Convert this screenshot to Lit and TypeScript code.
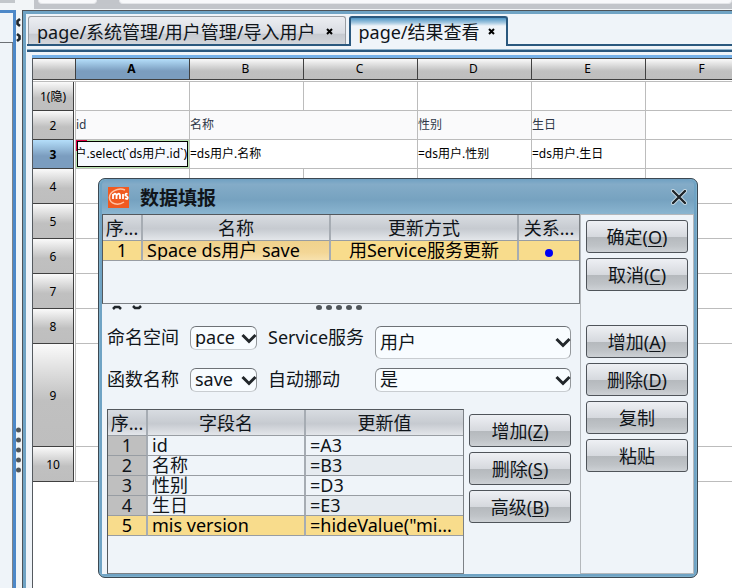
import { LitElement, html, css, nothing } from "lit";
import { customElement, property } from "lit/decorators.js";
import { classMap } from "lit/directives/class-map.js";

interface Cell {
  text: string;
  span?: number;
  tint?: boolean;
  editing?: boolean;
}

interface Row {
  label: string;
  size: string;
  selected?: boolean;
  cells: Cell[];
}

const blank = (n: number): Cell[] => Array.from({ length: n }, () => ({ text: "" }));

const columns = ["A", "B", "C", "D", "E", "F"];

const rows: Row[] = [
  { label: "1(隐)", size: "short", cells: blank(6) },
  {
    label: "2",
    size: "short",
    cells: [
      { text: "id", tint: true },
      { text: "名称", span: 2, tint: true },
      { text: "性别", tint: true },
      { text: "生日", tint: true },
      { text: "" },
    ],
  },
  {
    label: "3",
    size: "short",
    selected: true,
    cells: [
      { text: "户.select(`ds用户.id`)", editing: true },
      { text: "=ds用户.名称", span: 2 },
      { text: "=ds用户.性别" },
      { text: "=ds用户.生日" },
      { text: "" },
    ],
  },
  { label: "4", size: "normal", cells: blank(6) },
  { label: "5", size: "normal", cells: blank(6) },
  { label: "6", size: "normal", cells: blank(6) },
  { label: "7", size: "normal", cells: blank(6) },
  { label: "8", size: "normal", cells: blank(6) },
  { label: "9", size: "tall", cells: blank(6) },
  { label: "10", size: "normal", cells: blank(6) },
];

@customElement("report-grid")
export class ReportGrid extends LitElement {
  static styles = css`
    :host {
      display: block;
      overflow: hidden;
      background: #fff;
      border-top: 1px solid #454545;
      border-left: 1px solid #555a5f;
      font: 12px/16px "Noto Sans", "Noto Sans CJK SC", sans-serif;
      color: #000;
    }
    table {
      table-layout: fixed;
      border-collapse: separate;
      border-spacing: 0;
      width: 727px;
    }
    .head-col { width: 43px; }
    th, td { padding: 0; box-sizing: border-box; }
    th { font-weight: 400; text-align: center; background-repeat: no-repeat; background-clip: padding-box; }
    thead th {
      height: 23px;
      padding: 0 3px 2px 0;
      border-bottom: 1px solid #bcbcbc;
      background-image: linear-gradient(#404040, #404040), linear-gradient(#404040, #404040),
        linear-gradient(#fafafa, #c0c0c0 60%, #bebebe);
      background-position: right top, left bottom 1px, left top;
      background-size: 1px 21px, 100% 1px, 100% 20px;
    }
    thead .active {
      background-image: linear-gradient(#404040, #404040), linear-gradient(#404040, #404040),
        linear-gradient(#b4defa, #7b9dbf 60%, #7b9dbf);
    }
    .active { font-weight: 700; }
    tbody th {
      padding-right: 2px;
      border-right: 1px solid #bcbcbc;
      background-image: linear-gradient(#404040, #404040), linear-gradient(#404040, #404040),
        linear-gradient(#fafafa, #c0c0c0 55%, #bebebe);
      background-position: right 1px top, left bottom, left top;
      background-size: 1px 100%, 41px 1px, 41px 100%;
    }
    tbody .active {
      background-image: linear-gradient(#404040, #404040), linear-gradient(#404040, #404040),
        linear-gradient(#b4defa, #7b9dbf 55%, #7b9dbf);
    }
    td {
      border-right: 1px solid #bcbcbc;
      border-bottom: 1px solid #bcbcbc;
      white-space: nowrap;
      overflow: hidden;
    }
    .short { height: 29px; }
    .normal { height: 35px; }
    .tall { height: 103px; }
    .tint { background: #fafafb; color: #2f3848; }
    .editing { background: linear-gradient(135deg, #e00045 8px, #b9e6b0 8px); padding: 1px; }
    .editor {
      display: flex;
      justify-content: flex-end;
      align-items: center;
      box-sizing: border-box;
      height: 26px;
      overflow: hidden;
      border: 1px solid #000;
      background: #f6f9ff;
    }
  `;

  render() {
    return html`
      <table>
        <colgroup>
          <col class="head-col" />
          ${columns.map(() => html`<col />`)}
        </colgroup>
        <thead>
          <tr>
            <th></th>
            ${columns.map((c) => html`<th scope="col" class=${c === "A" ? "active" : ""}>${c}</th>`)}
          </tr>
        </thead>
        <tbody>
          ${rows.map(
            (r) => html`<tr class=${r.size}>
              <th scope="row" class=${r.selected ? "active" : ""}>${r.label}</th>
              ${r.cells.map(
                (c) => html`<td
                  colspan=${c.span ?? 1}
                  class=${classMap({ tint: !!c.tint, editing: !!c.editing })}
                >${c.editing ? html`<div class="editor"><span>${c.text}</span></div>` : c.text}</td>`
              )}
            </tr>`
          )}
        </tbody>
      </table>
    `;
  }
}

@customElement("push-button")
export class PushButton extends LitElement {
  @property() label = "";
  @property() key = "";

  static styles = css`
    :host { display: block; }
    button {
      display: block;
      box-sizing: border-box;
      width: 100%;
      height: 33px;
      padding: 0;
      border: 1px solid #4f545a;
      border-radius: 3px;
      background: linear-gradient(#eef0f4, #d6d9de 50%, #b5b9bd 52%, #bfc3c7 80%, #cdd1d5);
      font: 18px/30px "Noto Sans", "Noto Sans CJK SC", sans-serif;
      color: #10151a;
    }
    u { text-decoration-thickness: 1px; text-underline-offset: 2px; }
  `;

  render() {
    return html`<button type="button">${this.label}${this.key ? html`(<u>${this.key}</u>)` : nothing}</button>`;
  }
}

@customElement("combo-box")
export class ComboBox extends LitElement {
  @property() label = "";
  @property() value = "";
  @property({ type: Boolean, reflect: true }) tall = false;

  static styles = css`
    :host { display: contents; }
    label { white-space: nowrap; line-height: 22px; }
    .box { display: grid; align-items: center; height: 23px; }
    :host([tall]) .box { height: 33px; }
    select, svg { grid-area: 1 / 1; }
    select {
      appearance: none;
      box-sizing: border-box;
      width: 100%;
      height: 100%;
      padding: 0 0 2px 4px;
      border: 1px solid #c9cdd1;
      border-top: 1px solid #6d7176;
      border-left-color: #94989c;
      border-right-color: #94989c;
      border-radius: 6px;
      background: #f8fcff;
      font: 18px/20px "Noto Sans", "Noto Sans CJK SC", sans-serif;
      color: #10151a;
    }
    svg { justify-self: end; width: 16px; height: 11px; pointer-events: none; }
  `;

  render() {
    return html`
      <label for="field">${this.label}</label>
      <div class="box">
        <select id="field"><option>${this.value}</option></select>
        <svg viewBox="0 0 16 11"><path d="M1.5 2 L8 8.5 L14.5 2" fill="none" stroke="#22272b" stroke-width="3" /></svg>
      </div>
    `;
  }
}

const fields: [string, string][] = [
  ["id", "=A3"],
  ["名称", "=B3"],
  ["性别", "=D3"],
  ["生日", "=E3"],
  ["mis version", '=hideValue("mi...'],
];

@customElement("fill-dialog")
export class FillDialog extends LitElement {
  static styles = css`
    :host {
      display: block;
      box-sizing: border-box;
      border: 1px solid #3c4852;
      border-radius: 7px;
      padding: 0 3px 3px;
      background: #6fa3c4;
      box-shadow: inset 0 0 0 1px #7fb0cc;
      font: 18px/20px "Noto Sans", "Noto Sans CJK SC", sans-serif;
      color: #10151a;
    }
    header {
      display: flex;
      align-items: center;
      height: 35px;
      gap: 11px;
      padding: 0 7px 0 6px;
      background: linear-gradient(#6fa0c2, #84acc8 15%, #76a2c0 60%, #8ab5d0);
      border-radius: 6px 6px 0 0;
    }
    h1 { margin: 0; flex: 1; font-size: 19px; line-height: 20px; font-weight: 700; padding-top: 3px; }
    .logo { width: 21px; height: 21px; margin-top: 1px; }
    .close { display: flex; padding: 0; border: 0; background: none; }
    .close svg { width: 16px; height: 16px; }
    .body { display: flex; background: #eff4f9; }
    .left { flex: 1; min-width: 0; }
    .side {
      display: flex;
      flex-direction: column;
      gap: 5px;
      box-sizing: border-box;
      width: 114px;
      padding: 5px 5px 0;
      border: 1px solid #b4b8bc;
    }
    .side .group { margin-top: 29px; }
    table { table-layout: fixed; border-collapse: separate; border-spacing: 0; width: 100%; }
    .pane { box-sizing: border-box; border: 1px solid #53585d; border-bottom-color: #7c8186; border-right-color: #7c8186; }
    .top { height: 90px; }
    th, td {
      padding: 0;
      box-sizing: border-box;
      overflow: hidden;
      white-space: nowrap;
      font-weight: 400;
      border-right: 2px solid #a6acb3;
      border-bottom: 1px solid #989da3;
    }
    th:last-child, td:last-child { border-right: 0; }
    th { height: 26px; background: linear-gradient(#d8dce1, #c6cad0 55%, #e3e6ea); }
    td { height: 20px; line-height: 19px; padding-left: 4px; }
    .mid { text-align: center; padding-left: 0; }
    .num { width: 40px; }
    .name { width: 188px; }
    .rel { width: 60px; }
    .field { width: 158px; }
    .no { background: #bfbfbf; text-align: center; padding: 0; }
    .alt td:last-child { background: #e6ebf0; }
    .chosen td, .chosen.chosen td:last-child { background: #f8dc8c; color: #000; }
    .chosen .focus, .chosen.chosen .focus { background: linear-gradient(#f0d28c, #f3d696 60%, #f8e2ae); }
    .dot { display: inline-block; width: 8px; height: 8px; border-radius: 50%; background: #0000f5; }
    .splitter { display: grid; grid-template-columns: 1fr auto 1fr; align-items: center; height: 6px; padding: 0 13px 0 9px; }
    .splitter svg { display: block; height: 5px; }
    .arrows { width: 32px; }
    .grips { width: 46px; }
    form {
      display: grid;
      grid-template-columns: 72px 67px 96px 1fr;
      grid-template-rows: 33px 23px;
      column-gap: 11px;
      row-gap: 9px;
      padding: 16px 9px 0 5px;
    }
    .lower { display: flex; gap: 5px; padding: 18px 9px 0 5px; }
    .list { flex: 1; min-width: 0; height: 165px; }
    .tools { display: flex; flex-direction: column; gap: 5px; width: 102px; padding-top: 5px; }
  `;

  render() {
    return html`
      <header>
        <svg class="logo" viewBox="0 0 21 21">
          <rect width="21" height="21" fill="#f05a20" />
          <path d="M17 3 C10 0 1 5 1.500 11 C2 17 10 19 16 15" fill="none" stroke="#ffc3a4" stroke-width="1.500" />
          <path d="M5 12 V7 M5 8.500 Q7 5 8.500 8 V12 M8.500 8.500 Q11 5 12 8 V12 M15 7 V12 M19.500 7 Q17 6 17.500 8.500 Q21 10 19 12 L17 11.500" fill="none" stroke="#fff" stroke-width="1.800" />
        </svg>
        <h1>数据填报</h1>
        <button class="close" type="button" aria-label="关闭">
          <svg viewBox="0 0 16 16"><path d="M2 2 L14 14 M14 2 L2 14" stroke="#cfe0ea" stroke-width="4" stroke-linecap="round" /><path d="M2 2 L14 14 M14 2 L2 14" stroke="#1e2429" stroke-width="2.400" stroke-linecap="round" /></svg>
        </button>
      </header>
      <div class="body">
        <div class="left">
          <div class="pane top">
            <table>
              <thead>
                <tr><th class="num">序...</th><th class="name">名称</th><th>更新方式</th><th class="rel">关系...</th></tr>
              </thead>
              <tbody>
                <tr class="chosen">
                  <td class="mid">1</td><td class="focus">Space ds用户 save</td><td class="mid">用Service服务更新</td><td class="mid"><span class="dot"></span></td>
                </tr>
              </tbody>
            </table>
          </div>
          <div class="splitter">
            <svg class="arrows" viewBox="0 0 32 5"><path d="M2 4 L4 2 H8 L10 4 M22 1 L24 3 H28 L30 1" fill="none" stroke="#20262b" stroke-width="2.500" /></svg>
            <svg class="grips" viewBox="0 0 46 5">
              ${[3, 13, 23, 33, 43].map((x) => html`<svg x=${x - 3} y="0" width="6" height="5" viewBox="0 0 6 5"><ellipse cx="3" cy="2.500" rx="3" ry="2.500" fill="#50565b" /></svg>`)}
            </svg>
          </div>
          <form>
            <combo-box label="命名空间" value="pace"></combo-box>
            <combo-box label="Service服务" value="用户" tall></combo-box>
            <combo-box label="函数名称" value="save"></combo-box>
            <combo-box label="自动挪动" value="是"></combo-box>
          </form>
          <div class="lower">
            <div class="pane list">
              <table>
                <thead>
                  <tr><th class="num">序...</th><th class="field">字段名</th><th>更新值</th></tr>
                </thead>
                <tbody>
                  ${fields.map(
                    ([name, value], i) => html`<tr class=${classMap({ chosen: i === 4, alt: i % 2 === 1 })}>
                      <td class="no">${i + 1}</td><td>${name}</td><td class="focus">${value}</td>
                    </tr>`
                  )}
                </tbody>
              </table>
            </div>
            <div class="tools">
              <push-button label="增加" key="Z"></push-button>
              <push-button label="删除" key="S"></push-button>
              <push-button label="高级" key="B"></push-button>
            </div>
          </div>
        </div>
        <div class="side">
          <push-button label="确定" key="O"></push-button>
          <push-button label="取消" key="C"></push-button>
          <push-button class="group" label="增加" key="A"></push-button>
          <push-button label="删除" key="D"></push-button>
          <push-button label="复制"></push-button>
          <push-button label="粘贴"></push-button>
        </div>
      </div>
    `;
  }
}

@customElement("app-root")
export class AppRoot extends LitElement {
  static styles = css`
    :host {
      display: flex;
      flex-direction: column;
      position: relative;
      height: 100vh;
      overflow: hidden;
      background: #f2f5f7;
      font: 18px/20px "Noto Sans", "Noto Sans CJK SC", sans-serif;
      color: #10151a;
    }
    .strip { display: flex; flex: none; height: 10px; gap: 19px; }
    .stub { width: 15px; height: 3px; background: #c3c7cb; }
    .bar { flex: 1; display: flex; gap: 22px; height: 9px; box-sizing: border-box; padding-left: 4px; background: #c2c5ca; }
    .chip { height: 4px; width: 59px; box-sizing: border-box; border: 1px solid #e4e6e9; border-top: 0; border-radius: 0 0 6px 6px; background: #f8f9fb; }
    .chip.wide { flex: 1; }
    .work { display: flex; flex: 1; min-height: 0; }
    .outer { box-sizing: border-box; width: 16px; border: 3px solid #4d88c8; border-left: 0; border-bottom: 0; background: #eff4f9; }
    .caption { height: 29px; border-bottom: 1px solid #6c7075; }
    .rest { height: 100%; border-right: 1px solid #7e8287; }
    .divider { width: 6px; display: flex; flex-direction: column; align-items: flex-start; }
    .divider svg { width: 5px; display: block; flex: none; }
    .collapse { height: 24px; margin-top: 8px; }
    .grip { height: 46px; margin-top: 385px; }
    .window {
      flex: 1;
      min-width: 0;
      display: flex;
      flex-direction: column;
      border-top: 1px solid #4c5359;
      border-left: 1px solid #4c5359;
      background: #eff4f9;
    }
    .frame { flex: 1; min-height: 0; display: flex; flex-direction: column; border-left: 3px solid #6fa3c4; border-top: 3px solid #6fa3c4; }
    .tabs { display: flex; align-items: flex-end; gap: 3px; height: 32px; flex: none; padding: 3px 0 0 1px; box-sizing: border-box; border-bottom: 2px solid #2a587e; margin-left: 1px; }
    .tab {
      display: flex;
      align-items: center;
      gap: 11px;
      box-sizing: border-box;
      height: 28px;
      padding: 2px 12px 0 8px;
      border: 1px solid #999da2;
      border-bottom: 0;
      border-radius: 3px 3px 0 0;
      background: linear-gradient(#eceef2, #d9dce2 60%, #c6cad0 64%, #d2d5da);
      font: inherit;
      color: inherit;
      white-space: nowrap;
    }
    .tab.current { height: 30px; gap: 8px; margin-bottom: -2px; padding: 0 11px 1px 7px; border: 2px solid #2a587e; border-bottom: 0; background: linear-gradient(#4e95c4, #a9cbe2 5px, #eff4f9 8px); }
    .tab svg { width: 7px; height: 7px; }
    .rule { flex: none; height: 3px; margin-top: 3px; box-sizing: border-box; border-top: 1px solid #8fb3cc; border-bottom: 2px solid #2a587e; margin-left: 1px; }
    .sheet { flex: 1; min-height: 0; margin: 3px 0 0 6px; border-top: 3px solid #76b1e8; display: flex; }
    report-grid { flex: 1; min-width: 0; }
    fill-dialog { position: absolute; left: 98px; right: 34px; top: 178px; }
  `;

  private tab(title: string, current = false) {
    return html`<button type="button" role="tab" aria-selected=${current} class=${classMap({ tab: true, current })}>
      ${title}<svg viewBox="0 0 7 7"><path d="M1 1 L6 6 M6 1 L1 6" stroke="#000" stroke-width="2" /></svg>
    </button>`;
  }

  render() {
    return html`
      <div class="strip">
        <div class="stub"></div>
        <div class="bar"><div class="chip"></div><div class="chip wide"></div></div>
      </div>
      <div class="work">
        <div class="outer"><div class="caption"></div><div class="rest"></div></div>
        <div class="divider">
          <svg class="collapse" viewBox="0 0 5 24"><path d="M4 1 L1.500 3 V6 L4 8 M1 16 L3.500 18 V21 L1 23" fill="none" stroke="#20262b" stroke-width="2.600" /></svg>
          <svg class="grip" viewBox="0 0 5 46">
            <path d="M2.500 3 V43.100" fill="none" stroke="#50565b" stroke-width="5" stroke-linecap="round" stroke-dasharray="0 10" />
          </svg>
        </div>
        <div class="window">
          <div class="frame">
            <div class="tabs" role="tablist">
              ${this.tab("page/系统管理/用户管理/导入用户")} ${this.tab("page/结果查看", true)}
            </div>
            <div class="rule"></div>
            <div class="sheet"><report-grid></report-grid></div>
          </div>
        </div>
      </div>
      <fill-dialog></fill-dialog>
    `;
  }
}
